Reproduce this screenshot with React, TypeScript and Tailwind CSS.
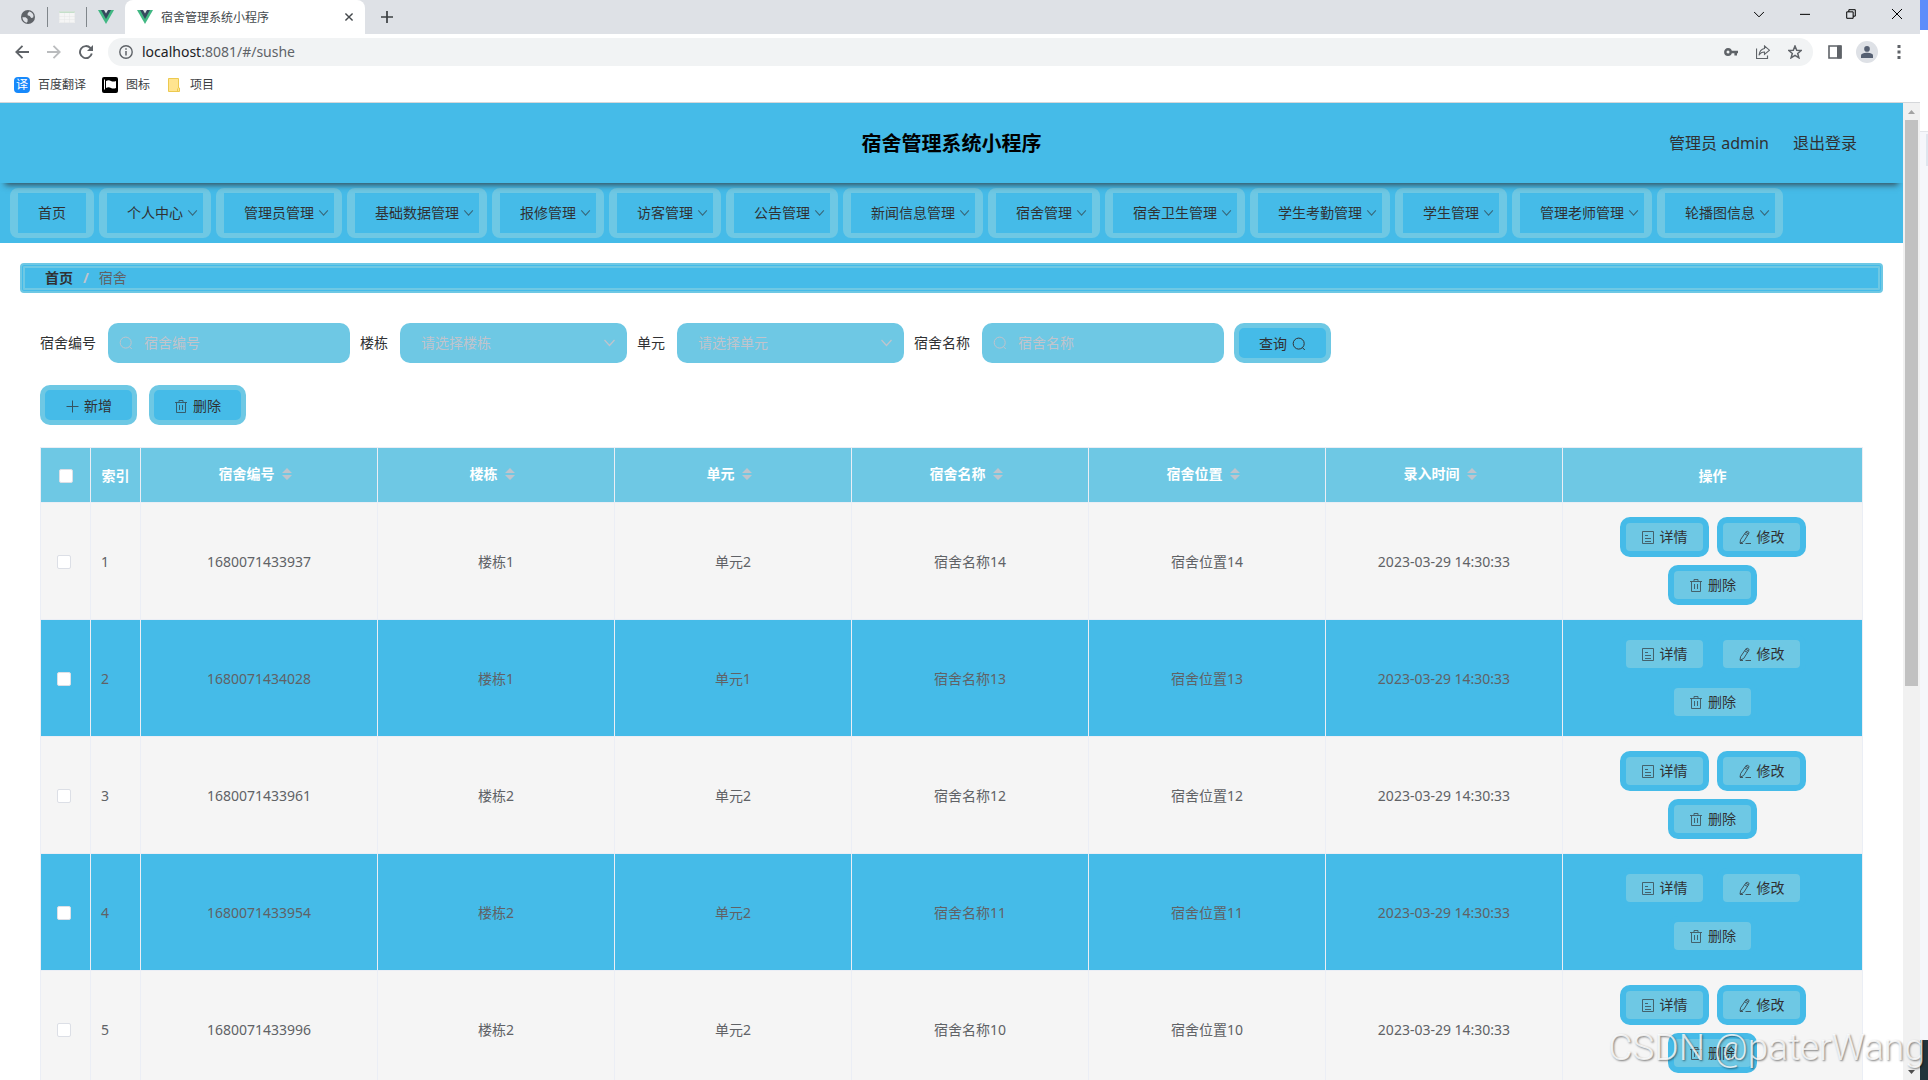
import type { ReactNode } from 'react'

interface Dorm {
  id: number
  code: string
  building: string
  unit: string
  name: string
  place: string
  time: string
}

const menus = [
  '个人中心',
  '管理员管理',
  '基础数据管理',
  '报修管理',
  '访客管理',
  '公告管理',
  '新闻信息管理',
  '宿舍管理',
  '宿舍卫生管理',
  '学生考勤管理',
  '学生管理',
  '管理老师管理',
  '轮播图信息',
]

const columns = ['宿舍编号', '楼栋', '单元', '宿舍名称', '宿舍位置', '录入时间']

const dorms: Dorm[] = [
  { id: 1, code: '1680071433937', building: '楼栋1', unit: '单元2', name: '宿舍名称14', place: '宿舍位置14', time: '2023-03-29 14:30:33' },
  { id: 2, code: '1680071434028', building: '楼栋1', unit: '单元1', name: '宿舍名称13', place: '宿舍位置13', time: '2023-03-29 14:30:33' },
  { id: 3, code: '1680071433961', building: '楼栋2', unit: '单元2', name: '宿舍名称12', place: '宿舍位置12', time: '2023-03-29 14:30:33' },
  { id: 4, code: '1680071433954', building: '楼栋2', unit: '单元2', name: '宿舍名称11', place: '宿舍位置11', time: '2023-03-29 14:30:33' },
  { id: 5, code: '1680071433996', building: '楼栋2', unit: '单元2', name: '宿舍名称10', place: '宿舍位置10', time: '2023-03-29 14:30:33' },
]

function Icon({ children, className = 'size-[14px]' }: { children: ReactNode; className?: string }) {
  return (
    <svg viewBox="0 0 14 14" fill="none" stroke="currentColor" strokeWidth="1" aria-hidden="true" className={`shrink-0 ${className}`}>
      {children}
    </svg>
  )
}

const SearchIcon = () => (
  <Icon>
    <circle cx="6.7" cy="6.6" r="5.5" />
    <path d="M10.4 10.6l2.4 2.4" />
  </Icon>
)

const DownIcon = ({ className = 'size-3' }: { className?: string }) => (
  <Icon className={className}>
    <path d="M1.500 4l5 5.500 5-5.500" strokeWidth="1.200" />
  </Icon>
)

const PlusIcon = () => (
  <Icon className="size-[14px] opacity-75">
    <path d="M7.5 1.5v12M1.5 7.5h12" />
  </Icon>
)

const TrashIcon = () => (
  <Icon className="size-[14px] opacity-75">
    <path d="M1 3.5h12M2.5 3.5v10h9v-10M5 3V1.5h4V3M5.5 6v5M8.5 6v5" strokeWidth="0.9" />
  </Icon>
)

const DetailIcon = () => (
  <Icon className="size-[14px] opacity-75">
    <path d="M1.5 1.5h11v12h-11zM4 5.500h3M4 8.500h6M4 11.500h6" strokeWidth="0.9" />
  </Icon>
)

const EditIcon = () => (
  <Icon className="size-[14px] opacity-85">
    <path d="M7.700 2.200l2.800 1.700-4.800 7.600L2 13.200l.600-3.600zM6.700 3.800l2.800 1.700M2 13.500h3M7.500 13.500H13" strokeWidth="0.9" />
    <path d="M10.500 3.900l.6-1.500-1.900-1.200-1.500 1" strokeWidth="0.9" />
  </Icon>
)

function VueLogo() {
  return (
    <svg viewBox="0 0 16 14" className="h-[14px] w-4 shrink-0" aria-hidden="true">
      <path d="M0 0h16L8 14z" fill="#41b883" />
      <path d="M3 0h10L8 9z" fill="#35495e" />
      <path d="M6 0h4L8 3.5z" fill="#dee1e6" />
    </svg>
  )
}

function TabStrip() {
  return (
    <div className="flex h-[34px] items-stretch bg-[#dee1e6]">
      <div className="flex items-center pl-[21px] pr-[11px]">
        <svg viewBox="0 0 14 14" className="size-[14px]" aria-hidden="true">
          <circle cx="7" cy="7" r="7" fill="#5f6368" />
          <path d="M1.4 7.2h3.2l2 1.7v2.6l-1 1.2C3.2 12 1.4 9.8 1.4 7.2zM8.2 1.6l-1.6 2v1.6l2.2.8 1.4 2 2-.4.3-1.8c-.2-2-2-4-4.3-4.200z" fill="#dee1e6" />
        </svg>
        <span className="ml-3 h-5 w-px bg-[#80868b]" />
        <svg viewBox="0 0 16 12" className="ml-[11px] h-3 w-4" aria-hidden="true">
          <path d="M0 0h16v12H0z" fill="#f5f5f5" />
          <path d="M0 0h16v2H0z" fill="#c5dfca" />
          <path d="M.5.500h15v11H.5zM0 5.500h16M0 8.500h16M5.500 2v10M10.500 2v10" stroke="#e4e7e7" strokeWidth=".5" fill="none" />
        </svg>
        <span className="ml-[11px] h-5 w-px bg-[#80868b]" />
        <span className="ml-[11px]">
          <VueLogo />
        </span>
      </div>
      <div className="flex w-[240px] items-center rounded-t-lg bg-white pl-3 pr-[11px]">
        <VueLogo />
        <span className="ml-2 flex-1 pt-0.5 text-xs text-[#45494d]">宿舍管理系统小程序</span>
        <button aria-label="关闭标签页" className="text-[#45494d]">
          <Icon className="size-[10px]">
            <path d="M2 2l10 10M12 2L2 12" strokeWidth="2" />
          </Icon>
        </button>
      </div>
      <button aria-label="新标签页" className="ml-4 text-[#3c4043]">
        <Icon className="size-3">
          <path d="M7 0v14M0 7h14" strokeWidth="2" />
        </Icon>
      </button>
      <div className="ml-auto flex items-start gap-9 pr-[18px] pt-[9px] text-black">
        <button aria-label="搜索标签页">
          <Icon className="size-[10px]">
            <path d="M0 4l7 7 7-7" strokeWidth="1.400" />
          </Icon>
        </button>
        <button aria-label="最小化">
          <Icon className="size-[10px]">
            <path d="M0 7.500h14" strokeWidth="1.400" />
          </Icon>
        </button>
        <button aria-label="还原">
          <Icon className="size-[10px]">
            <path d="M1 4h9v9H1zM4 4V1h9v9h-3" strokeWidth="1.400" />
          </Icon>
        </button>
        <button aria-label="关闭">
          <Icon className="size-[10px]">
            <path d="M0 0l14 14M14 0L0 14" strokeWidth="1.400" />
          </Icon>
        </button>
      </div>
    </div>
  )
}

function Toolbar() {
  return (
    <div className="flex h-9 items-center bg-white pl-[15px] pr-[14px] text-[#5f6368]">
      <button aria-label="后退">
        <Icon>
          <path d="M14 7H1.500M7.500 .800L1.300 7l6.200 6.200" strokeWidth="1.800" />
        </Icon>
      </button>
      <button aria-label="前进" className="ml-[18px] text-[#babcbe]">
        <Icon>
          <path d="M0 7h12.500M6.500 .800L12.700 7l-6.200 6.200" strokeWidth="1.800" />
        </Icon>
      </button>
      <button aria-label="重新加载" className="ml-[18px]">
        <Icon>
          <path d="M12.800 8.600A6 6 0 1 1 11.400 3l1 1" strokeWidth="1.900" />
          <path d="M14 0v6H8z" fill="currentColor" stroke="none" />
        </Icon>
      </button>
      <div className="ml-[15px] flex h-7 flex-1 items-center rounded-full bg-[#f1f3f4] pl-[11px] pr-[11px]">
        <Icon>
          <circle cx="7" cy="7" r="6.200" strokeWidth="1.400" />
          <path d="M7 6v4.500M7 3.300v1.500" strokeWidth="1.500" />
        </Icon>
        <p className="ml-[9px] flex-1 text-sm">
          <span className="text-[#202124]">localhost</span>:8081/#/sushe
        </p>
        <div className="flex items-center gap-[18px]">
          <Icon>
            <circle cx="4" cy="7" r="2.700" strokeWidth="2.400" />
            <path d="M7 7h7M11.700 7v3.600" strokeWidth="2.600" />
          </Icon>
          <Icon>
            <path d="M.500 3.500v10h11v-3" strokeWidth="1.200" />
            <path d="M8.500 1l5 4.200-5 4.200V7C6 7 4.200 8 3 10.200 3.400 6.500 5.400 4 8.500 3.500z" strokeWidth="1.100" />
          </Icon>
          <Icon>
            <path d="M7 1l1.700 4.200 4.500.300-3.500 2.900 1.200 4.400L7 10.300l-3.900 2.500 1.200-4.400L.800 5.500l4.500-.300z" strokeWidth="1.500" />
          </Icon>
        </div>
      </div>
      <button aria-label="侧边栏" className="ml-[15px]">
        <Icon>
          <path d="M1 1h12v12H1z" strokeWidth="1.600" />
          <path d="M9.500 1H13v12H9.500z" fill="currentColor" />
        </Icon>
      </button>
      <button aria-label="用户" className="ml-[14px] grid size-[22px] place-items-center rounded-full bg-[#dee1e6] text-[#566072]">
        <Icon className="size-3">
          <circle cx="7" cy="3.400" r="3.300" fill="currentColor" stroke="none" />
          <path d="M0 14v-3c0-2 4-3 7-3s7 1 7 3v3z" fill="currentColor" stroke="none" />
        </Icon>
      </button>
      <button aria-label="菜单" className="ml-[14px]">
        <Icon>
          <path d="M7 0v3M7 5.500v3M7 11v3" strokeWidth="3" />
        </Icon>
      </button>
    </div>
  )
}

function Bookmarks() {
  return (
    <div className="flex h-[33px] items-center border-b border-[#d5d7da] bg-white pb-0.5 pl-[14px] text-xs text-[#3c4043]">
      <a href="#fanyi" className="flex items-center gap-2">
        <span className="grid size-4 place-items-center rounded-sm bg-[#1789fb] text-xs leading-4 text-white">译</span>
        百度翻译
      </a>
      <a href="#tubiao" className="ml-4 flex items-center gap-2">
        <svg viewBox="0 0 16 16" className="size-4" aria-hidden="true">
          <rect width="16" height="16" rx="2" fill="#000" />
          <path d="M2.500 2.500v10" stroke="#fff" />
          <path d="M4 4c2-1 3.500-.800 5 0s3 .800 5 0v7c-2 .800-3.500.800-5 0s-3-1-5 0z" fill="#fff" />
        </svg>
        图标
      </a>
      <a href="#xiangmu" className="ml-[18px] flex items-center gap-[10px]">
        <svg viewBox="0 0 12 14" className="h-[14px] w-3" aria-hidden="true">
          <path d="M.500.500h10v9.500h1v3.500H.500z" fill="#ffe48f" stroke="#ecc94f" />
          <path d="M9.500 10.500v3" stroke="#ecc94f" />
        </svg>
        项目
      </a>
    </div>
  )
}

function Header() {
  return (
    <header className="relative z-10 grid h-20 grid-cols-[1fr_auto_1fr] items-center bg-[#45bbe8] shadow-[0_7px_6px_-5px_rgba(48,49,51,0.8)]">
      <h1 className="col-start-2 pt-0.5 text-xl font-bold text-black">宿舍管理系统小程序</h1>
      <div className="flex justify-end gap-6 pr-[46px] text-base text-[#303133]">
        <span>管理员 admin</span>
        <a href="#logout">退出登录</a>
      </div>
    </header>
  )
}

function Nav() {
  return (
    <nav className="flex gap-[5px] bg-[#45bbe8] px-[10px] py-[5px] text-sm text-[#303133]">
      <a href="#home" className="flex h-[50px] shrink-0 items-center rounded-lg border-x-8 border-y-5 border-[#6ec8e4] px-5">
        首页
      </a>
      {menus.map((menu) => (
        <button
          key={menu}
          className="flex h-[50px] shrink-0 items-center gap-1 rounded-lg border-x-8 border-y-5 border-[#6ec8e4] pl-5 pr-1"
        >
          {menu}
          <DownIcon className="size-3 opacity-60" />
        </button>
      ))}
    </nav>
  )
}

function SearchInput({ id, label }: { id: string; label: string }) {
  return (
    <div className="flex items-center gap-3">
      <label htmlFor={id}>{label}</label>
      <div className="flex h-10 w-[242px] items-center gap-[11px] rounded-[10px] bg-[#6ec8e4] px-[11px] text-[#c0c4cc]">
        <SearchIcon />
        <input id={id} placeholder={label} className="min-w-0 flex-1 outline-none placeholder:text-[#c0c4cc]" />
      </div>
    </div>
  )
}

function SearchSelect({ id, label }: { id: string; label: string }) {
  return (
    <div className="flex items-center gap-3">
      <label htmlFor={id}>{label}</label>
      <div className="flex h-10 w-[227px] items-center rounded-[10px] bg-[#6ec8e4] pl-[21px] pr-[10px] text-[#c0c4cc]">
        <select id={id} className="min-w-0 flex-1 appearance-none outline-none">
          <option>请选择{label}</option>
        </select>
        <DownIcon className="size-[14px]" />
      </div>
    </div>
  )
}

function MainButton({ children }: { children: ReactNode }) {
  return (
    <button className="flex h-10 items-center gap-[5px] rounded-[10px] border-5 border-[#6ec8e4] bg-[#45bbe8] px-5 pt-0.5">
      {children}
    </button>
  )
}

function RowButton({ children }: { children: ReactNode }) {
  return (
    <button className="flex h-10 items-center gap-[5px] rounded-[10px] border-6 border-[#45bbe8] bg-[#6ec8e4] px-[15px] text-[#303133]">
      {children}
    </button>
  )
}

function CheckBox({ label }: { label: string }) {
  return (
    <input
      type="checkbox"
      aria-label={label}
      className="block size-[14px] appearance-none rounded-xs border border-[#dcdfe6] bg-white"
    />
  )
}

function DormTable() {
  const cell = 'border-b border-r border-[#ebeef5]'
  const textCell = `pt-0.5 ${cell}`

  return (
    <table className="w-full table-fixed border-separate border-spacing-0 border-l border-t border-[#ebeef5]">
      <thead>
        <tr className="h-[55px] bg-[#6ec8e4] text-white">
          <th className={`w-[50px] pl-[18px] pt-0.5 ${cell}`}>
            <CheckBox label="全选" />
          </th>
          <th className={`w-[50px] pt-0.5 ${cell}`}>索引</th>
          {columns.map((col) => (
            <th key={col} className={`pb-0.5 pr-2 ${cell}`}>
              <div className="flex items-center justify-center gap-[7px]">
                {col}
                <svg viewBox="0 0 10 16" className="h-4 w-[10px]" aria-hidden="true">
                  <path d="M5 2l5 5H0zM0 9h10l-5 5z" fill="#c0c4cc" />
                </svg>
              </div>
            </th>
          ))}
          <th className={`w-[300px] pt-0.5 ${cell}`}>操作</th>
        </tr>
      </thead>
      <tbody className="text-center text-[#606266]">
        {dorms.map((dorm) => (
          <tr key={dorm.id} className="bg-[#f5f5f5] even:bg-[#45bbe8]">
            <td className={`pl-4 ${textCell}`}>
              <CheckBox label={`选择${dorm.id}`} />
            </td>
            <td className={`pl-[10px] text-left ${textCell}`}>{dorm.id}</td>
            <td className={textCell}>{dorm.code}</td>
            <td className={textCell}>{dorm.building}</td>
            <td className={textCell}>{dorm.unit}</td>
            <td className={textCell}>{dorm.name}</td>
            <td className={textCell}>{dorm.place}</td>
            <td className={textCell}>{dorm.time}</td>
            <td className={`px-10 py-[14px] ${cell}`}>
              <div className="flex flex-wrap justify-center gap-2">
                <RowButton>
                  <DetailIcon />
                  详情
                </RowButton>
                <RowButton>
                  <EditIcon />
                  修改
                </RowButton>
                <RowButton>
                  <TrashIcon />
                  删除
                </RowButton>
              </div>
            </td>
          </tr>
        ))}
      </tbody>
    </table>
  )
}

function ScrollBar() {
  return (
    <div className="flex w-[17px] shrink-0 flex-col items-center bg-[#f1f1f1]">
      <svg viewBox="0 0 17 17" className="size-[17px] shrink-0" aria-hidden="true">
        <path d="M5 11l3.500-4 3.500 4z" fill="#a3a3a3" />
      </svg>
      <div className="flex-1 self-stretch px-[2px]">
        <div className="h-[60%] bg-[#c1c1c1]" />
      </div>
      <svg viewBox="0 0 17 17" className="size-[17px] shrink-0" aria-hidden="true">
        <path d="M5 7l3.500 4 3.500-4z" fill="#505050" />
      </svg>
    </div>
  )
}

export default function App() {
  return (
    <div className="relative flex h-screen overflow-hidden bg-white font-['Noto_Sans','Noto_Sans_CJK_SC',sans-serif]">
      <div className="flex min-w-0 flex-1 flex-col">
        <TabStrip />
        <Toolbar />
        <Bookmarks />
        <div className="flex min-h-0 flex-1">
          <div className="min-w-0 flex-1 overflow-hidden">
            <Header />
            <Nav />
            <main className="px-5 pt-5 text-sm text-[#303133]">
              <div className="flex h-[30px] items-center rounded border-5 border-double border-[#6ec8e4] bg-[#45bbe8] pl-5">
                <a href="#home" className="font-bold">
                  首页
                </a>
                <span className="mx-[10px] font-bold text-[#c0c4cc]">/</span>
                <span className="text-[#606266]">宿舍</span>
              </div>
              <div className="px-5 pt-[30px]">
                <form className="flex items-center gap-[10px]">
                  <SearchInput id="code" label="宿舍编号" />
                  <SearchSelect id="building" label="楼栋" />
                  <SearchSelect id="unit" label="单元" />
                  <SearchInput id="name" label="宿舍名称" />
                  <MainButton>
                    查询
                    <SearchIcon />
                  </MainButton>
                </form>
                <div className="mb-[22px] mt-[22px] flex gap-3">
                  <MainButton>
                    <PlusIcon />
                    新增
                  </MainButton>
                  <MainButton>
                    <TrashIcon />
                    删除
                  </MainButton>
                </div>
                <DormTable />
              </div>
            </main>
          </div>
          <ScrollBar />
        </div>
      </div>
      {/* sliver of the window behind the browser */}
      <div className="flex w-2 shrink-0 flex-col bg-[#f5f6fb]">
        <div className="h-[30px] bg-[#5f8dfb]" />
        <div className="h-[102px] border-b border-[#e3e5ea] bg-white" />
        <div className="ml-[6px] mt-[2px] h-8 bg-[#dfe5ee]" />
        <div className="mt-auto h-10 bg-[#22343b]" />
      </div>
      <p className="absolute bottom-2 right-[3px] z-20 font-['Roboto',sans-serif] text-[37px] font-light leading-[48px] text-white/80 [text-shadow:1px_1px_2px_rgba(0,0,0,0.5)]">
        CSDN @paterWang
      </p>
    </div>
  )
}
